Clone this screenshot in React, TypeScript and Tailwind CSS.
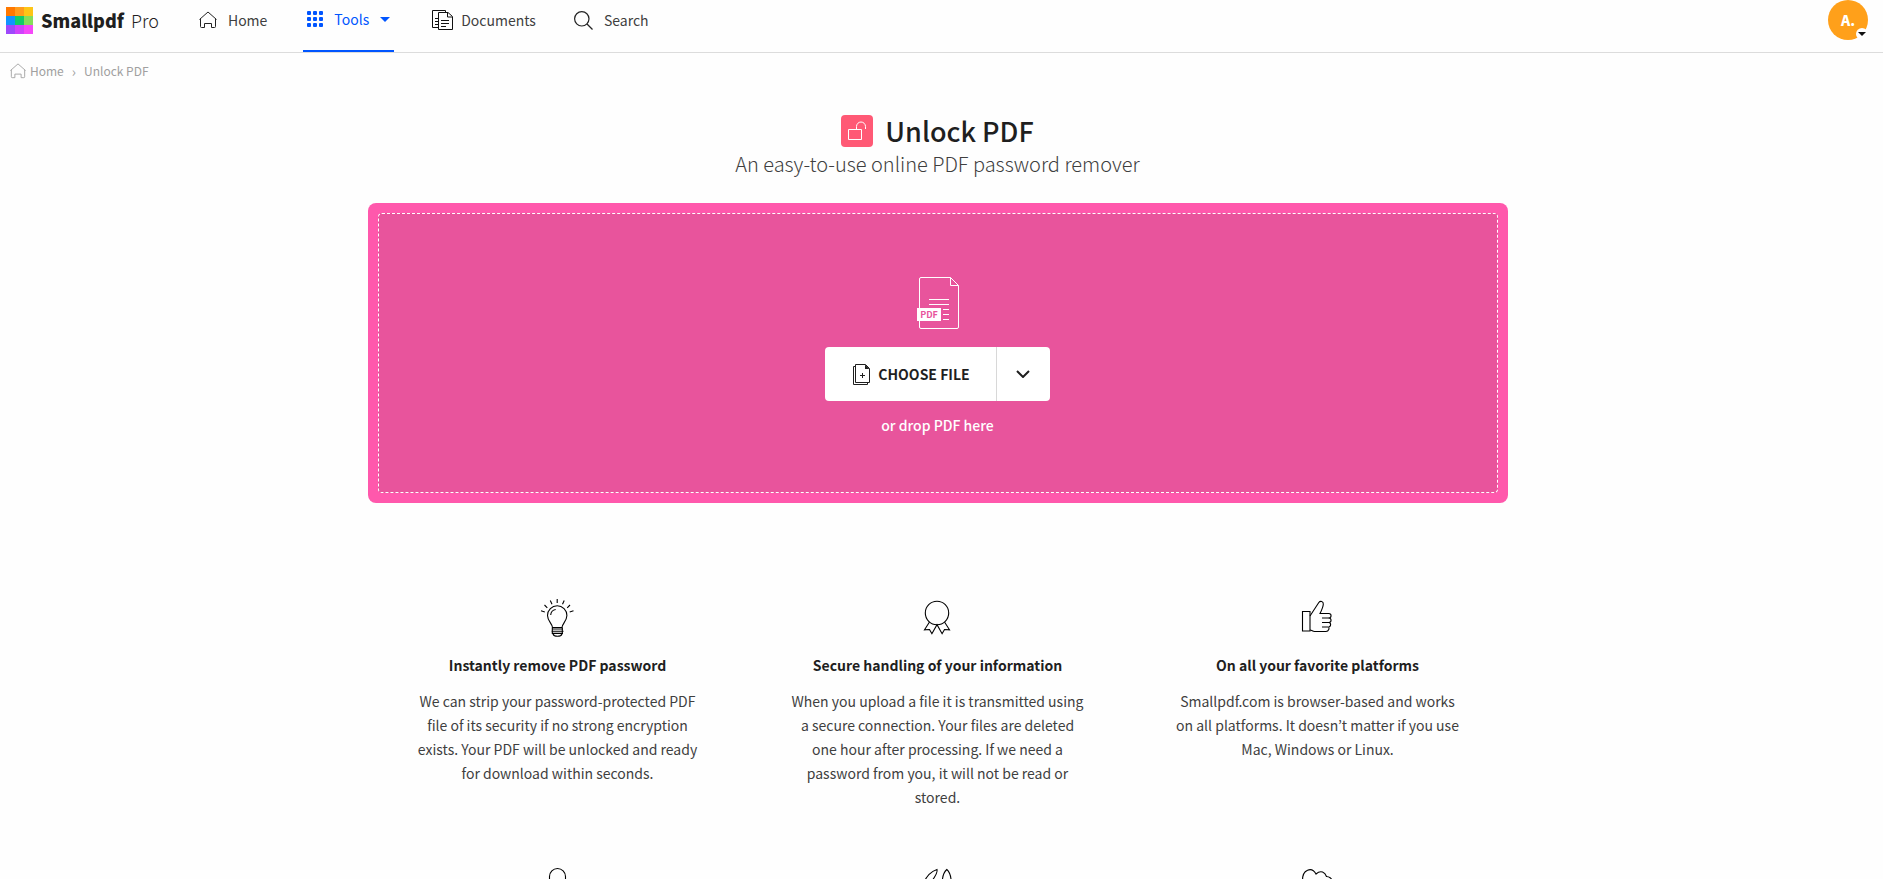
import type { ReactNode } from "react";

interface Feature {
  title: string;
  text: string;
  icon: ReactNode;
}

function HomeIcon({ className }: { className?: string }) {
  return (
    <svg viewBox="0 0 18 18" fill="none" stroke="currentColor" className={className}>
      <path d="M.5 8.5 9 1l8.500 7.500M1.500 7.700v7.800a1 1 0 0 0 1 1h3v-4h7v4h3a1 1 0 0 0 1-1V7.700" strokeLinejoin="round" />
    </svg>
  );
}

function Logo() {
  return (
    <svg viewBox="0 0 27 27" className="size-[27px]" shapeRendering="crispEdges">
      <rect width="9" height="9" fill="#ff7800" />
      <rect x="9" width="9" height="9" fill="#ff9c1a" />
      <rect x="18" width="9" height="9" fill="#fdc516" />
      <rect y="9" width="9" height="9" fill="#0f93ff" />
      <rect x="9" y="9" width="9" height="9" fill="#10cb6a" />
      <rect x="18" y="9" width="9" height="9" fill="#87dd5a" />
      <rect y="18" width="9" height="9" fill="#9e48fb" />
      <rect x="9" y="18" width="9" height="9" fill="#cf42fb" />
      <rect x="18" y="18" width="9" height="9" fill="#f548f8" />
    </svg>
  );
}

function GridIcon() {
  return (
    <svg viewBox="0 0 16 16" fill="currentColor" className="size-4">
      {[0, 6, 12].map((y) => [0, 6, 12].map((x) => <rect key={`${x}-${y}`} x={x} y={y} width="4" height="4" rx="1" />))}
    </svg>
  );
}

function DocumentsIcon() {
  return (
    <svg viewBox="0 0 21 21" fill="none" stroke="#111" className="size-[21px]">
      <path d="M6.5 17.5h-6V.5h13v2" />
      <path d="M3 8.5h3M3 11.5h3M3 14.5h3" />
      <path d="M6.5 2.5H16l4.5 4v13h-14z" />
      <path d="M15.5 3v4H20" />
      <path d="M9 10.5h8M9 13.5h8M9 16.5h5" />
    </svg>
  );
}

function SearchIcon() {
  return (
    <svg viewBox="0 0 19 19" fill="none" stroke="#222" strokeWidth="1.2" className="size-[19px]">
      <circle cx="7.8" cy="7.8" r="7.2" />
      <path d="m13 13 5.5 5.5" />
    </svg>
  );
}

function UnlockIcon() {
  return (
    <svg viewBox="0 0 32 32" fill="none" stroke="#fff" className="size-8 rounded bg-[#ff5975]">
      <path d="M7.5 14.5h13v10h-13z" />
      <path d="M15.5 14.5v-3a4.5 4.5 0 0 1 9 0V14" />
    </svg>
  );
}

function PdfIcon() {
  return (
    <svg viewBox="0 0 42 52" fill="none" stroke="#fff" className="h-[52px] w-[42px]">
      <path d="M4 .5h29.5l8 8V50a1.5 1.5 0 0 1-1.5 1.5H4A1.5 1.5 0 0 1 2.5 50V2A1.5 1.5 0 0 1 4 .5z" />
      <path d="M33.5.5v8h8" />
      <path d="M12 22.5h20M12 27.5h20M26 32.5h6M26 37.5h6M26 42.5h6" />
      <path d="M0 31h24v13H0z" fill="#fff" stroke="none" />
      <text x="12" y="41" textAnchor="middle" fontSize="9" fontWeight="700" fill="#e8549c" stroke="none">PDF</text>
    </svg>
  );
}

function AddFileIcon() {
  return (
    <svg viewBox="0 0 17 21" fill="none" stroke="#1f1f1f" className="h-[21px] w-[17px]">
      <path d="M2.5 2.5h-2v18h14v-2" />
      <path d="M2.5.5h10l4 4v14h-14z" />
      <path d="M12 .5V5h4.5z" fill="#1f1f1f" stroke="none" />
      <path d="M9.5 9v5M7 11.5h5" />
    </svg>
  );
}

function BulbIcon() {
  return (
    <svg viewBox="1 0 40 40" fill="none" stroke="#000" strokeWidth="1.1" className="size-10">
      <path d="M15.5 29.5c0-3.5-5-6.500-5-12a9.700 9.700 0 0 1 19.400 0c0 5.500-4.900 8.500-4.900 12z" />
      <path d="M13.700 17a6 6 0 0 1 5-5.500" />
      <path d="M15 31h11M14.500 33.200h12M15 35.400h11M16 36c1 3 8 3 9 0M15.300 29.500V36M25.300 29.500V36" />
      <path d="M20.200 1v4M13.300 2.500l1.700 3.700M27.200 2.500l-1.700 3.700M7.500 7l2.800 2.800M33 7l-2.800 2.800M4 12.700l3.800 1.200M36.500 12.700l-3.800 1.200" />
    </svg>
  );
}

function BadgeIcon() {
  return (
    <svg viewBox="1 0 40 40" fill="none" stroke="#000" strokeWidth="1.1" className="size-10">
      <circle cx="20" cy="15" r="11.7" />
      <path d="m12.500 24-5 7.800 5-.3 2.400 4.200L20 26.700l5.100 9 2.400-4.200 5 .3-5-7.800" />
    </svg>
  );
}

function ThumbIcon() {
  return (
    <svg viewBox="1 0 40 40" fill="none" stroke="#000" strokeWidth="1.1" className="size-10">
      <path d="M5.5 13.500H13v19.500H5.500z" />
      <path d="M13 18 21.800 4.500c1.500-2 4.800-1.300 4.500 1.700-.3 3-1.800 6.300-3.300 9.300h8.800c3 0 3 4.500 0 4.500 3 .2 3 4.500 0 4.500 2.500.2 2.500 4.500-.5 4.500 1.500.5.500 4.500-2.300 4.500H17.500c-2 0-2.500-1.500-4.500-1.500" />
      <path d="M25 20h7M25 24.500h7M25 29h6" />
    </svg>
  );
}

function LockIcon() {
  return (
    <svg viewBox="0 0 40 40" fill="none" stroke="#000" strokeWidth="1.1" className="size-10">
      <path d="M11.500 18v-8.500a8 8 0 0 1 16 0V18" />
      <path d="M7.500 18.500h24v18h-24z" />
    </svg>
  );
}

function PencilsIcon() {
  return (
    <svg viewBox="0 0 40 40" fill="none" stroke="#000" strokeWidth="1.1" className="size-10">
      <path d="M5.500 16c2.500-5.500 7-11.500 13.500-13.500 1.500 4-5 11-8 15.500z" />
      <path d="M24.500 36V12c.5-4 2-7.500 4.300-9.500 2.300 2 3.700 5.500 4.200 9.500v24z" />
    </svg>
  );
}

function CloudIcon() {
  return (
    <svg viewBox="0 0 40 40" fill="none" stroke="#000" strokeWidth="1.1" className="size-10">
      <path d="M4.500 14C4 2 14-.500 18 7c5-4.500 9-1.500 10.500 2.500 6 .5 8 7 6 12-4 7-27 7-30-7.500z" />
    </svg>
  );
}

const features: Feature[] = [
  {
    title: "Instantly remove PDF password",
    text: "We can strip your password-protected PDF file of its security if no strong encryption exists. Your PDF will be unlocked and ready for download within seconds.",
    icon: <BulbIcon />,
  },
  {
    title: "Secure handling of your information",
    text: "When you upload a file it is transmitted using a secure connection. Your files are deleted one hour after processing. If we need a password from you, it will not be read or stored.",
    icon: <BadgeIcon />,
  },
  {
    title: "On all your favorite platforms",
    text: "Smallpdf.com is browser-based and works on all platforms. It doesn’t matter if you use Mac, Windows or Linux.",
    icon: <ThumbIcon />,
  },
];

export default function App() {
  return (
    <div className="min-h-screen bg-[#fefefe] font-['Noto_Sans_CJK_KR',sans-serif] text-[#1f1f1f]">
      <header className="flex h-[53px] justify-between border-b border-[#dcdcdc] pr-[15px] pl-1.5">
        <div className="flex">
          <a href="#" className="flex h-10 items-center gap-2">
            <Logo />
            <span className="flex gap-[7px] text-lg leading-10 font-black">
              Smallpdf <span className="font-light">Pro</span>
            </span>
          </a>
          <nav className="ml-10 flex text-sm text-[#3f3f3f]">
            <a href="#" className="flex h-10 items-center gap-[11px]">
              <HomeIcon className="size-[18px] text-[#222]" />
              Home
            </a>
            <a href="#" className="ml-9 flex border-b-2 border-[#0055ff] px-1 text-[#0055ff]">
              <span className="flex h-[38px] items-center gap-[11px]">
                <GridIcon />
                Tools
                <svg viewBox="0 0 10 5" fill="currentColor" className="h-[5px] w-2.5">
                  <path d="M0 0h10L5 5z" />
                </svg>
              </span>
            </a>
            <a href="#" className="ml-[38px] flex h-10 items-center gap-2">
              <DocumentsIcon />
              Documents
            </a>
            <a href="#" className="ml-[38px] flex h-10 items-center gap-[11px]">
              <SearchIcon />
              Search
            </a>
          </nav>
        </div>
        <button className="relative size-10 rounded-full bg-[#ffa01a] text-sm font-black text-white">
          A.
          <span className="absolute right-0 bottom-0 flex size-3 items-center justify-center rounded-full bg-white">
            <svg viewBox="0 0 8 4" fill="#111" className="h-1 w-2">
              <path d="M0 0h8L4 4z" />
            </svg>
          </span>
        </button>
      </header>

      <nav aria-label="Breadcrumb" className="flex h-9 items-center pl-2.5 text-xs text-[#a0a0a0]">
        <a href="#" className="flex items-center gap-1">
          <HomeIcon className="size-4" />
          Home
        </a>
        <span className="mx-2 text-sm">›</span>
        <span>Unlock PDF</span>
      </nav>

      <main className="pr-2">
        <div className="mt-[22px] flex h-10 items-center justify-center gap-3">
          <UnlockIcon />
          <h1 className="text-[27px] leading-10 font-medium">Unlock PDF</h1>
        </div>
        <p className="text-center text-xl leading-[26px] font-light text-[#3f3f3f]">An easy-to-use online PDF password remover</p>

        <section className="mx-auto mt-[26px] max-w-[1140px] rounded-lg bg-[#ff58ac] p-2.5">
          <div className="flex h-[280px] flex-col items-center rounded border border-dashed border-white bg-[#e8549c] pt-[63px]">
            <PdfIcon />
            <div className="mt-[18px] flex h-[54px] overflow-hidden rounded bg-white">
              <button className="flex items-center gap-2 pr-[26px] pl-7 text-sm font-bold">
                <AddFileIcon />
                CHOOSE FILE
              </button>
              <button aria-label="More sources" className="flex w-[54px] items-center justify-center border-l border-[#d8d8d8]">
                <svg viewBox="0 0 14 8" fill="none" stroke="#1f1f1f" strokeWidth="2" className="h-2 w-3.5">
                  <path d="m1 1 6 6 6-6" />
                </svg>
              </button>
            </div>
            <p className="mt-3 text-sm leading-6 font-medium text-white">or drop PDF here</p>
          </div>
        </section>

        <div className="mx-auto mt-[95px] grid max-w-[1140px] grid-cols-3">
          {features.map((feature) => (
            <section key={feature.title} className="flex flex-col items-center text-center">
              {feature.icon}
              <h2 className="mt-[15px] text-sm leading-6 font-bold">{feature.title}</h2>
              <p className="mt-3 max-w-[293px] text-sm leading-6 text-[#3f3f3f]">{feature.text}</p>
            </section>
          ))}
        </div>
        <div className="mx-auto mt-[58px] grid max-w-[1140px] grid-cols-3 justify-items-center">
          <LockIcon />
          <PencilsIcon />
          <CloudIcon />
        </div>
      </main>
    </div>
  );
}
